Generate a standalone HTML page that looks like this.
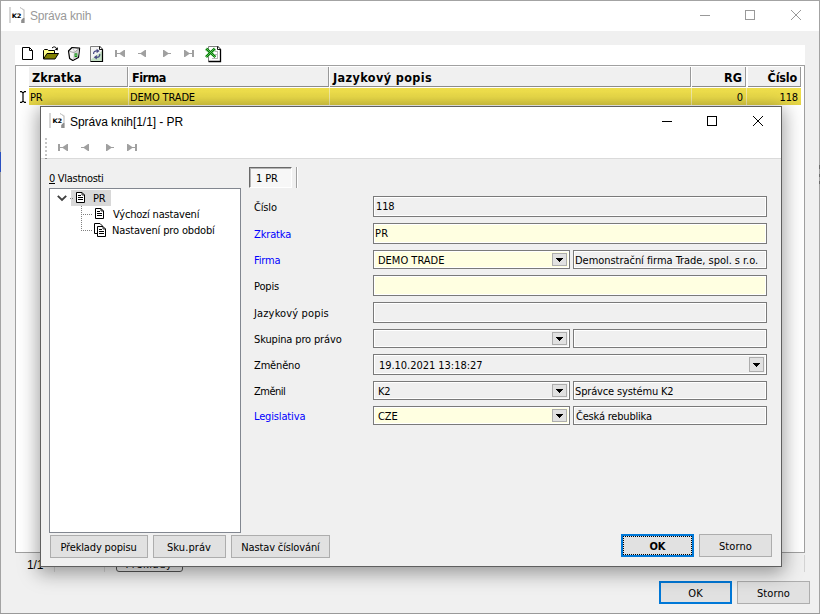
<!DOCTYPE html>
<html lang="cs">
<head>
<meta charset="utf-8">
<title>Správa knih</title>
<style>
*{box-sizing:border-box;margin:0;padding:0}
html,body{width:820px;height:614px;overflow:hidden;background:#f0f0f0}
body{position:relative;font-family:"DejaVu Sans Condensed","Liberation Sans",sans-serif;font-size:11px;letter-spacing:-0.15px;color:#000;line-height:1}
.a{position:absolute}
svg{position:absolute;overflow:visible}
.t{position:absolute;white-space:nowrap;line-height:14px;height:14px}
.seg{font-family:"Liberation Sans",sans-serif;font-size:12px}
/* outer window */
#wtitle{left:1px;top:1px;width:818px;height:30px;background:#fff}
#wbL{left:0;top:0;width:1px;height:614px;background:#a3a3a3}
#wbT{left:0;top:0;width:820px;height:1px;background:#a3a3a3}
#wbR{left:819px;top:0;width:1px;height:614px;background:#a3a3a3}
#wbB{left:0;top:613px;width:820px;height:1px;background:#999}
#bluemark{left:0;top:152px;width:1px;height:20px;background:#2a50c0}
/* toolbar + grid */
#tbar{left:15px;top:45px;width:790px;height:20px;background:#fff}
#grid{left:15px;top:65px;width:790px;height:488px;background:#fff;border:1px solid #a0a0a0}
.hc{position:absolute;top:67px;height:20px;background:#f0f0f0;border-right:1px solid #999;border-bottom:1px solid #8c8c8c;font-weight:bold;font-size:12.5px;line-height:21px;padding-left:3px;white-space:nowrap;overflow:hidden;letter-spacing:0}
.hc.r{text-align:right;padding-right:3px;padding-left:0}
.rc{position:absolute;top:88px;height:17px;background:linear-gradient(#efdf4c,#ecdc49 50%,#e4d445);font-size:11px;line-height:19px;padding-left:1px;white-space:nowrap;overflow:hidden}
.rc.r{text-align:right;padding-right:3px;padding-left:0}
.vs{position:absolute;top:555px;width:1px;height:17px;background:#d4d4d4}
/* inner dialog */
#dlg{left:40px;top:106px;width:742px;height:461px;background:#f0f0f0;border:1px solid #5f5f5f;box-shadow:0 4px 18px 2px rgba(0,0,0,.38)}
#dtitle{left:0;top:0;width:740px;height:52px;background:#fff;border-bottom:1px solid #dadada}
.f{position:absolute;border:1px solid #7a7a7a;box-shadow:inset 0 0 0 1px #fff;background:#f0f0f0;font-size:11px;white-space:nowrap;overflow:hidden}
.f.y{background:#ffffe1}
.f span{position:absolute;left:3px;top:3px;line-height:14px}
.f.c span{top:3px}
.dd{position:absolute;width:15px;height:13px;background:#e1e1e1;border:1px solid #adadad}
.dd:after{content:"";position:absolute;left:3px;top:4px;width:7px;height:4px;background:linear-gradient(#000,#000) 0 0/7px 1px no-repeat,linear-gradient(#000,#000) 1px 1px/5px 1px no-repeat,linear-gradient(#000,#000) 2px 2px/3px 1px no-repeat,linear-gradient(#000,#000) 3px 3px/1px 1px no-repeat}
.dd.big{height:15px}.dd.big:after{top:5px}
.lb{position:absolute;left:254px;white-space:nowrap;line-height:14px;font-size:11px}
.bl{color:#0000ff}
.btn{position:absolute;background:#e1e1e1;border:1px solid #adadad;text-align:center;font-size:11px;line-height:23px;white-space:nowrap}
.btn.def{border:2px solid #0078d7;line-height:21px}
.nav path,.nav rect{fill:#a0a0a0}
</style>
</head>
<body>
<!-- ===== outer window ===== -->
<div id="wtitle" class="a"></div>
<div id="wbT" class="a"></div><div id="wbL" class="a"></div><div id="wbR" class="a"></div><div id="wbB" class="a"></div>
<div id="bluemark" class="a"></div><div class="a" style="left:819px;top:165px;width:1px;height:4px;background:#6e6e6e"></div><div class="a" style="left:819px;top:174px;width:1px;height:3px;background:#6e6e6e"></div><div class="a" style="left:819px;top:181px;width:1px;height:3px;background:#6e6e6e"></div>
<svg id="ico1" style="left:9px;top:7px" width="16" height="17" viewBox="0 0 16 17">
  <rect x="0" y="0" width="2" height="16" fill="#d6d6d6"/>
  <path d="M11 0.5 L15 3 L15 11" fill="none" stroke="#aaa" stroke-width="0.9"/>
  <path d="M12 1 L13.5 2.4 H15.5" fill="none" stroke="#d0d0d0" stroke-width="0.8"/>
  <path d="M12.2 16 V13 L14.2 11 H15.6 V16 Z" fill="#8e8e8e"/>
  <text x="2.8" y="11" font-family="DejaVu Sans, Liberation Sans, sans-serif" font-weight="bold" font-size="6.2" textLength="9.6" lengthAdjust="spacingAndGlyphs" fill="#000">K2</text>
</svg>
<div class="t seg" style="left:30px;top:9px;color:#999;letter-spacing:-0.2px">Správa knih</div>
<svg style="left:700px;top:10px" width="102" height="10" viewBox="0 0 102 10" fill="none" stroke="#999" stroke-width="1">
  <path d="M0 5.5 H10"/>
  <rect x="45.5" y="0.5" width="9" height="9"/>
  <path d="M91 0 L101 10 M101 0 L91 10"/>
</svg>

<div id="tbar" class="a"></div>
<!-- toolbar icons -->
<svg style="left:22px;top:47px" width="12" height="13" viewBox="0 0 12 13">
  <path d="M0.5 0.5 H7.5 L10.5 3.5 V12.5 H0.5 Z" fill="#fff" stroke="#000"/>
  <path d="M7.5 0.5 V3.5 H10.5" fill="none" stroke="#000"/>
</svg>
<svg style="left:43px;top:46px" width="16" height="14" viewBox="0 0 16 14">
  <path d="M0.5 13 V4.5 L1.5 3.5 H4.5 L5.5 4.5 H11.5 V7" fill="#ffff88" stroke="#000"/>
  <path d="M0.5 13 L4 7.5 H15.5 L12 13 Z" fill="#808000" stroke="#000"/>
  <path d="M9 2 C10.5 0.3 12.8 0.6 13.6 2.6" fill="none" stroke="#000"/>
  <path d="M15 1.2 L14.6 4.4 L11.6 3.6 Z" fill="#000"/>
</svg>
<svg style="left:68px;top:47px" width="13" height="14" viewBox="0 0 13 14">
  <path d="M0.5 4 L4 0.5 L11.6 1.2 L10.5 10.4 L4.8 13.5 L1.6 11.4 Z" fill="#f6f6f6" stroke="#000" stroke-width="1.2" stroke-linejoin="round"/>
  <path d="M5.9 5.8 L11 1.8 L10 10 L5 12.8 Z" fill="#cdcdcd"/>
  <path d="M1 4.2 L5.9 5.6 L11.2 1.6" fill="none" stroke="#9a9a9a" stroke-width="0.9"/>
  <path d="M4 1.2 L6.2 3.2 L5.9 5.6" fill="none" stroke="#bdbdbd" stroke-width="0.8"/>
  <rect x="6.6" y="6.4" width="2.6" height="3.6" fill="#0c920c"/>
  <rect x="7.5" y="7.4" width="1" height="1.4" fill="#cfe8cf"/>
</svg>
<svg style="left:90px;top:46px" width="14" height="16" viewBox="0 0 14 16">
  <path d="M1 1 H9 L12 4 V15 H1 Z" fill="#f4f4f4"/>
  <path d="M1 13.5 L12 5 V15 H1 Z" fill="#c4dfc4"/>
  <path d="M0.5 15.5 V0.5 H9.5" fill="none" stroke="#808080"/>
  <path d="M9.5 0.5 L12.5 3.5 V15.5 H0.5" fill="none" stroke="#000" stroke-width="1.2"/>
  <path d="M9.5 0.5 V3.5 H12.5" fill="#fff" stroke="#000" stroke-width="0.9"/>
  <path d="M3.6 8 C3.4 5.6 5 4.6 7.6 5" fill="none" stroke="#4b4b86" stroke-width="1.2"/>
  <path d="M6.6 2.8 L9.6 5 L6.6 7.2 Z" fill="#4b4b86"/>
  <path d="M9.8 8 C10 10.6 8.4 11.6 5.8 11.2" fill="none" stroke="#4b4b86" stroke-width="1.2"/>
  <path d="M6.8 13.4 L3.8 11.2 L6.8 9 Z" fill="#4b4b86"/>
</svg>
<svg class="nav" style="left:115px;top:50px" width="80" height="7" viewBox="0 0 80 7">
  <rect x="0" y="0" width="2" height="7"/><rect x="2" y="3" width="3" height="1"/><path d="M4 3.5 L9 0 H10 V7 H9 Z"/>
  <rect x="23" y="3" width="3" height="1"/><path d="M25 3.5 L30 0 H31 V7 H30 Z"/>
  <rect x="53" y="3" width="3" height="1"/><path d="M54 3.5 L49 0 H48 V7 H49 Z"/>
  <rect x="74" y="3" width="3" height="1"/><path d="M75 3.5 L70 0 H69 V7 H70 Z"/><rect x="77" y="0" width="2" height="7"/>
</svg>
<svg style="left:205px;top:46px" width="17" height="16" viewBox="0 0 17 16">
  <defs><pattern id="chk" width="2" height="2" patternUnits="userSpaceOnUse"><rect width="2" height="2" fill="#5fb45f"/><rect width="1" height="1" fill="#008000"/><rect x="1" y="1" width="1" height="1" fill="#008000"/></pattern></defs>
  <path d="M3.5 0.5 H12.5 L15.5 3.5 V15.5 H3.5 Z" fill="#fff"/>
  <path d="M3.5 15.5 V0.5 H12.5" fill="none" stroke="#808080"/>
  <path d="M12.5 0.5 L15.5 3.5 V15.5 H3.5" fill="none" stroke="#000" stroke-width="1.3"/>
  <path d="M12.5 0.5 V3.5 H15.5" fill="#fff" stroke="#000" stroke-width="0.9"/>
  <path d="M10 5.5 H13 M10 8.5 H13 M7 12.5 H13 M12.5 5 V12.5" stroke="#b8b8b8" stroke-width="1" fill="none"/>
  <path d="M1 2.6 L10.4 11 M10 2.6 L1 11" stroke="url(#chk)" stroke-width="3" fill="none"/>
</svg>

<!-- grid -->
<div id="grid" class="a"></div>
<div class="hc" style="left:29px;width:99px;letter-spacing:0.05px">Zkratka</div>
<div class="hc" style="left:129px;width:200px;letter-spacing:-0.5px">Firma</div>
<div class="hc" style="left:330px;width:361px;letter-spacing:0.4px;padding-left:3px">Jazykový popis</div>
<div class="hc r" style="left:692px;width:54px">RG</div>
<div class="hc r" style="left:748px;width:53px;letter-spacing:-0.2px">Číslo</div>
<div class="a" style="left:29px;top:88px;width:772px;height:17px;background:#f1e9a4"></div>
<div class="rc" style="left:29px;width:99px">PR</div>
<div class="rc" style="left:129px;width:200px">DEMO TRADE</div>
<div class="rc" style="left:330px;width:361px"></div>
<div class="rc r" style="left:692px;width:54px">0</div>
<div class="rc r" style="left:747px;width:54px">118</div>
<svg style="left:20px;top:91px" width="6" height="12" viewBox="0 0 6 12" fill="none" stroke="#000" stroke-width="1.2">
  <path d="M0 0.6 H2 M4 0.6 H6 M0 11.4 H2 M4 11.4 H6 M3 1 V11 M2 1 L3 2 L4 1 M2 11 L3 10 L4 11"/>
</svg>

<div class="t seg" style="left:27px;top:558px">1/1</div>
<div class="vs" style="left:54px"></div><div class="vs" style="left:104px"></div><div class="vs" style="left:804px"></div>
<div class="btn" style="left:116px;top:549px;width:67px;height:23px;background:#f0f0f0;border-color:#555;border-radius:0 0 3px 3px;line-height:14px;padding-top:8px;letter-spacing:0.6px;text-indent:-1px">Překlady</div>
<div class="btn def" style="left:659px;top:581px;width:73px;height:23px;letter-spacing:0">OK</div>
<div class="btn" style="left:737px;top:581px;width:73px;height:23px;letter-spacing:0.1px">Storno</div>

<!-- ===== inner dialog ===== -->
<div id="dlg" class="a">
  <div id="dtitle" class="a"></div>
</div>
<svg style="left:49px;top:113px" width="16" height="16" viewBox="0 0 16 16">
  <rect x="0" y="0" width="2" height="15" fill="#d6d6d6"/>
  <path d="M11 0.5 L15 3 L15 10" fill="none" stroke="#aaa" stroke-width="0.9"/>
  <path d="M12 1 L13.5 2.4 H15.5" fill="none" stroke="#d0d0d0" stroke-width="0.8"/>
  <path d="M12.2 15 V12 L14.2 10 H15.6 V15 Z" fill="#8e8e8e"/>
  <text x="3.4" y="10" font-family="DejaVu Sans, Liberation Sans, sans-serif" font-weight="bold" font-size="6.2" textLength="9.6" lengthAdjust="spacingAndGlyphs" fill="#000">K2</text>
</svg>
<div class="t seg" style="left:70px;top:115px;letter-spacing:-0.04px">Správa knih[1/1] - PR</div>
<svg style="left:662px;top:116px" width="102" height="10" viewBox="0 0 102 10" fill="none" stroke="#000" stroke-width="1">
  <path d="M0 5.5 H10"/>
  <rect x="45.5" y="0.5" width="9" height="9"/>
  <path d="M91 0 L101 10 M101 0 L91 10"/>
</svg>
<div class="a" style="left:45px;top:138px;width:2px;height:18px;background:repeating-linear-gradient(#c6c6c6 0 2px,transparent 2px 4px)"></div><div class="a" style="left:45px;top:158px;width:2px;height:1px;background:#8a8a8a"></div>
<svg class="nav" style="left:58px;top:144px" width="80" height="7" viewBox="0 0 80 7">
  <rect x="0" y="0" width="2" height="7"/><rect x="2" y="3" width="3" height="1"/><path d="M4 3.5 L9 0 H10 V7 H9 Z"/>
  <rect x="23" y="3" width="3" height="1"/><path d="M25 3.5 L30 0 H31 V7 H30 Z"/>
  <rect x="53" y="3" width="3" height="1"/><path d="M54 3.5 L49 0 H48 V7 H49 Z"/>
  <rect x="74" y="3" width="3" height="1"/><path d="M75 3.5 L70 0 H69 V7 H70 Z"/><rect x="77" y="0" width="2" height="7"/>
</svg>

<div class="t" style="left:49px;top:172px;letter-spacing:-0.3px"><u>0</u> Vlastnosti</div>
<div class="a" style="left:49px;top:188px;width:192px;height:345px;background:#fff;border:1px solid #828790"></div>
<div class="a" style="left:71px;top:190px;width:40px;height:16px;background:#d8d8d8"></div>
<svg style="left:57px;top:195px" width="10" height="6" viewBox="0 0 10 6"><path d="M0.8 0.8 L5 5 L9.2 0.8" fill="none" stroke="#404040" stroke-width="1.9"/></svg>
<div class="a" style="left:70px;top:198px;width:4px;height:1px;background:repeating-linear-gradient(90deg,#808080 0 1px,transparent 1px 2px)"></div>
<div class="a" style="left:81px;top:206px;width:1px;height:25px;background:repeating-linear-gradient(#808080 0 1px,transparent 1px 2px)"></div>
<div class="a" style="left:83px;top:214px;width:10px;height:1px;background:repeating-linear-gradient(90deg,#808080 0 1px,transparent 1px 2px)"></div>
<div class="a" style="left:83px;top:230px;width:10px;height:1px;background:repeating-linear-gradient(90deg,#808080 0 1px,transparent 1px 2px)"></div>
<svg style="left:76px;top:192px" width="9" height="11" viewBox="0 0 9 11"><path d="M0.5 0.5 H6 L8.5 3 V10.5 H0.5 Z" fill="#fff" stroke="#000"/><path d="M2 3.5 H5 M2 5.5 H7 M2 7.5 H7" stroke="#000" fill="none"/><path d="M6 0.5 V3 H8.5" stroke="#000" fill="none" stroke-width=".8"/></svg>
<svg style="left:95px;top:208px" width="9" height="11" viewBox="0 0 9 11"><path d="M0.5 0.5 H6 L8.5 3 V10.5 H0.5 Z" fill="#fff" stroke="#000"/><path d="M2 3.5 H5 M2 5.5 H7 M2 7.5 H7" stroke="#000" fill="none"/><path d="M6 0.5 V3 H8.5" stroke="#000" fill="none" stroke-width=".8"/></svg>
<svg style="left:94px;top:223px" width="12" height="14" viewBox="0 0 12 14"><path d="M0.5 0.5 H6 L8.5 3 V10.5 H0.5 Z" fill="#fff" stroke="#000"/><path d="M3.5 3.5 H9 L11.5 6 V13.5 H3.5 Z" fill="#fff" stroke="#000"/><path d="M5 6.5 H8 M5 8.5 H10 M5 10.5 H10" stroke="#000" fill="none"/><path d="M9 3.5 V6 H11.5" stroke="#000" fill="none" stroke-width=".8"/></svg>
<div class="t" style="left:93px;top:192px">PR</div>
<div class="t" style="left:113px;top:208px;letter-spacing:-0.2px">Výchozí nastavení</div>
<div class="t" style="left:112px;top:224px">Nastavení pro období</div>

<div class="a" style="left:249px;top:167px;width:43px;height:21px;background:#f7f7f7;border:1px solid #fff;border-top-color:#696969;border-left-color:#696969;box-shadow:inset 1px 1px 0 #b4b4b4"></div>
<div class="t" style="left:256px;top:172px">1 PR</div>
<div class="a" style="left:296px;top:167px;width:1px;height:21px;background:#a0a0a0"></div>
<div class="a" style="left:297px;top:167px;width:1px;height:21px;background:#fff"></div>

<div class="lb" style="top:201px">Číslo</div>
<div class="lb bl" style="top:228px">Zkratka</div>
<div class="lb bl" style="top:254px">Firma</div>
<div class="lb" style="top:280px">Popis</div>
<div class="lb" style="top:307px;letter-spacing:0.15px">Jazykový popis</div>
<div class="lb" style="top:333px">Skupina pro právo</div>
<div class="lb" style="top:359px">Změněno</div>
<div class="lb" style="top:385px;letter-spacing:-0.5px">Změnil</div>
<div class="lb bl" style="top:410px">Legislativa</div>

<div class="f" style="left:373px;top:196px;width:394px;height:21px"><span style="left:2px">118</span></div>
<div class="f y" style="left:373px;top:223px;width:394px;height:21px"><span style="left:1px;letter-spacing:0.3px">PR</span></div>
<div class="f y c" style="left:373px;top:250px;width:197px;height:19px"><span style="left:4px;letter-spacing:0">DEMO TRADE</span></div>
<div class="dd" style="left:552px;top:253px"></div>
<div class="f c" style="left:573px;top:250px;width:194px;height:19px"><span style="left:1px;letter-spacing:-0.04px">Demonstrační firma Trade, spol. s r.o.</span></div>
<div class="f y" style="left:373px;top:275px;width:394px;height:21px"></div>
<div class="f" style="left:373px;top:302px;width:394px;height:21px"></div>
<div class="f c" style="left:373px;top:329px;width:197px;height:19px"></div>
<div class="dd" style="left:552px;top:332px"></div>
<div class="f c" style="left:573px;top:329px;width:194px;height:19px"></div>
<div class="f" style="left:373px;top:354px;width:394px;height:21px"><span style="left:5px;top:4px;letter-spacing:-0.04px">19.10.2021 13:18:27</span></div>
<div class="dd big" style="left:749px;top:357px"></div>
<div class="f c" style="left:373px;top:381px;width:197px;height:19px"><span style="left:4px">K2</span></div>
<div class="dd" style="left:552px;top:384px"></div>
<div class="f c" style="left:573px;top:381px;width:194px;height:19px"><span style="left:1px">Správce systému K2</span></div>
<div class="f y c" style="left:373px;top:406px;width:197px;height:19px"><span style="left:4px">CZE</span></div>
<div class="dd" style="left:552px;top:409px"></div>
<div class="f c" style="left:573px;top:406px;width:194px;height:19px"><span style="left:2px;letter-spacing:-0.2px">Česká rebublika</span></div>

<div class="btn" style="left:50px;top:535px;width:98px;height:23px;text-indent:-1px">Překlady popisu</div>
<div class="btn" style="left:153px;top:535px;width:73px;height:23px;letter-spacing:0.1px;text-indent:-1px">Sku.práv</div>
<div class="btn" style="left:231px;top:535px;width:99px;height:23px">Nastav číslování</div>
<div class="btn def" style="left:621px;top:534px;width:73px;height:23px;font-weight:bold">OK<div class="a" style="left:0;top:0;right:0;bottom:0;border:1px dotted #000"></div></div>
<div class="btn" style="left:699px;top:534px;width:73px;height:23px;letter-spacing:0.1px">Storno</div>
</body>
</html>
